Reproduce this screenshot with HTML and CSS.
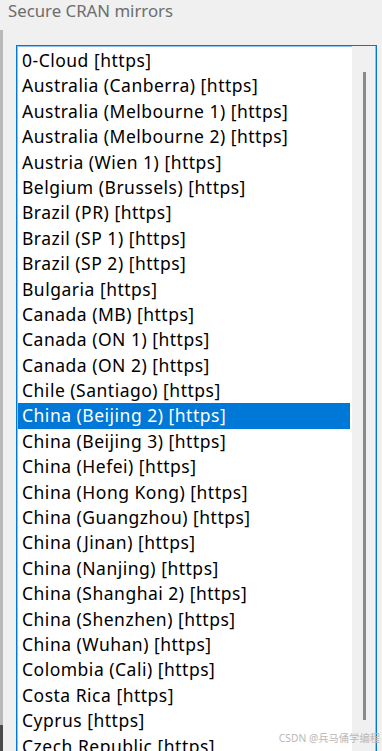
FILE: index.html
```html
<!DOCTYPE html>
<html lang="en">
<head>
  <meta charset="UTF-8" />
  <title>Secure CRAN mirrors</title>
  <link rel="stylesheet" href="styles.css">
</head>
<body>
  <div class="window">
    <div class="edge"></div>
    <div class="panel">
      <h1 class="caption">Secure CRAN mirrors</h1>
      <div class="listbox">
        <ul class="items">
          <li>0-Cloud [https]</li>
          <li>Australia (Canberra) [https]</li>
          <li>Australia (Melbourne 1) [https]</li>
          <li>Australia (Melbourne 2) [https]</li>
          <li>Austria (Wien 1) [https]</li>
          <li>Belgium (Brussels) [https]</li>
          <li>Brazil (PR) [https]</li>
          <li>Brazil (SP 1) [https]</li>
          <li>Brazil (SP 2) [https]</li>
          <li>Bulgaria [https]</li>
          <li>Canada (MB) [https]</li>
          <li>Canada (ON 1) [https]</li>
          <li>Canada (ON 2) [https]</li>
          <li>Chile (Santiago) [https]</li>
          <li class="selected">China (Beijing 2) [https]</li>
          <li>China (Beijing 3) [https]</li>
          <li>China (Hefei) [https]</li>
          <li>China (Hong Kong) [https]</li>
          <li>China (Guangzhou) [https]</li>
          <li>China (Jinan) [https]</li>
          <li>China (Nanjing) [https]</li>
          <li>China (Shanghai 2) [https]</li>
          <li>China (Shenzhen) [https]</li>
          <li>China (Wuhan) [https]</li>
          <li>Colombia (Cali) [https]</li>
          <li>Costa Rica [https]</li>
          <li>Cyprus [https]</li>
          <li>Czech Republic [https]</li>
        </ul>
        <div class="scrollbar">
          <div class="thumb"></div>
        </div>
      </div>
    </div>
  </div>

  <div class="watermark">CSDN @兵马俑学编程</div>
</body>
</html>
```

FILE: styles.css
```css
html, body {
  margin: 0;
  padding: 0;
  height: 751px;
  overflow: hidden;
}

body {
  background-color: #f0f0f0;
  font-family: 'Noto Sans', 'Open Sans', sans-serif;
  color: #000;
  position: relative;
}

.window {
  display: flex;
  height: 100%;
}

.edge {
  width: 3px;
  margin-top: 30px;
  background: linear-gradient(#b9b9b9 0, #b9b9b9 695px, #4a4a4a 695px);
  flex-shrink: 0;
}

.panel {
  flex: 1;
  display: flex;
  flex-direction: column;
  min-height: 0;
}

.caption {
  flex-shrink: 0;
  margin: 0;
  padding: 0 0 0 5px;
  height: 45px;
  font-size: 16.8px;
  font-weight: 400;
  line-height: 22px;
  color: #6d6d6d;
}

.listbox {
  margin-left: 13px;
  width: 359px;
  flex: 1;
  min-height: 0;
  display: flex;
  border: 1px solid #0078d7;
  border-bottom: 0;
  box-shadow: inset 1px 1px 0 #8fc1ec, inset -1px 0 0 #8fc1ec;
  background: #fff;
  overflow: hidden;
}

.items {
  list-style: none;
  margin: 0;
  padding: 2px 2px 0 1px;
  width: 332px;
  flex-shrink: 0;
  font-size: 17.5px;
  letter-spacing: 0.5px;
}

.items li {
  height: 25.4px;
  line-height: 25.4px;
  padding-left: 4px;
  white-space: nowrap;
}

.items li.selected {
  background-color: #0078d7;
  color: #fff;
}

.scrollbar {
  flex: 1;
  background: #f0f0f0;
  margin-right: 1px;
  display: flex;
  justify-content: center;
  align-items: flex-start;
  padding-top: 26px;
}

.thumb {
  width: 3px;
  height: 648px;
  background: #8a8a8a;
  margin-left: 1px;
}

.watermark {
  position: absolute;
  right: 2px;
  bottom: 6px;
  font-size: 10.3px;
  color: #b8b8b8;
  font-family: 'Noto Sans', 'Noto Sans CJK SC', sans-serif;
}
```
